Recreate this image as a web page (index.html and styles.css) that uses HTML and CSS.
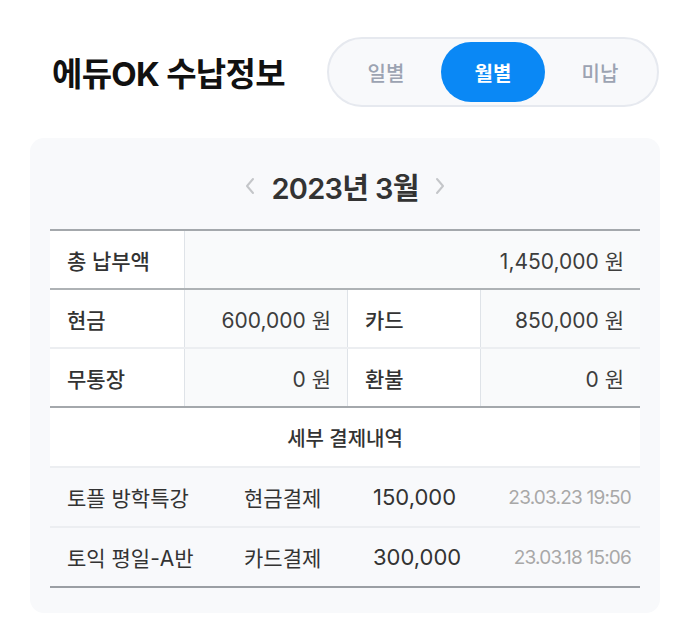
FILE: index.html
```html
<!DOCTYPE html>
<html lang="ko">
<head>
<meta charset="utf-8">
<title>에듀OK 수납정보</title>
<link rel="stylesheet" href="styles.css">
</head>
<body>
<header class="top">
  <h1 class="title">에듀OK 수납정보</h1>
  <nav class="seg">
    <span class="seg-item">일별</span>
    <span class="seg-item active">월별</span>
    <span class="seg-item">미납</span>
  </nav>
</header>
<section class="card">
  <div class="month-nav">
    <svg class="chev" width="12" height="20" viewBox="0 0 12 20"><path d="M9 3 L3 10 L9 17" fill="none" stroke="#c4c6c9" stroke-width="2" stroke-linecap="round" stroke-linejoin="round"/></svg>
    <span class="month">2023년 3월</span>
    <svg class="chev" width="12" height="20" viewBox="0 0 12 20"><path d="M3 3 L9 10 L3 17" fill="none" stroke="#c4c6c9" stroke-width="2" stroke-linecap="round" stroke-linejoin="round"/></svg>
  </div>
  <div class="summary">
    <div class="row row-total">
      <div class="cell label">총 납부액</div>
      <div class="cell value span3">1,450,000 원</div>
    </div>
    <div class="row row-mid">
      <div class="cell label">현금</div>
      <div class="cell value">600,000 원</div>
      <div class="cell label">카드</div>
      <div class="cell value">850,000 원</div>
    </div>
    <div class="row row-end">
      <div class="cell label">무통장</div>
      <div class="cell value">0 원</div>
      <div class="cell label">환불</div>
      <div class="cell value">0 원</div>
    </div>
    <div class="detail-head">세부 결제내역</div>
    <div class="detail">
      <span class="d-name">토플 방학특강</span>
      <span class="d-method">현금결제</span>
      <span class="d-amount">150,000</span>
      <span class="d-date">23.03.23 19:50</span>
    </div>
    <div class="detail last">
      <span class="d-name">토익 평일-A반</span>
      <span class="d-method">카드결제</span>
      <span class="d-amount">300,000</span>
      <span class="d-date">23.03.18 15:06</span>
    </div>
  </div>
</section>
</body>
</html>
```
FILE: styles.css
```css
* { box-sizing: border-box; }
html, body { margin: 0; padding: 0; background: #ffffff; }
body {
  font-family: Inter, "Noto Sans CJK KR", sans-serif;
  color: #333333;
  width: 690px;
}
.top {
  display: flex;
  align-items: center;
  justify-content: space-between;
  padding: 37px 31px 0 52px;
}
.title {
  margin: 0;
  font-size: 33px;
  font-weight: 700;
  letter-spacing: -0.7px;
  color: #111111;
}
.seg {
  display: grid;
  grid-template-columns: repeat(3, 104px);
  gap: 3px;
  padding: 3px 5px;
  height: 70px;
  border: 2px solid #e6e9ef;
  border-radius: 35px;
  background: #f8f9fb;
}
.seg-item {
  display: flex;
  align-items: center;
  justify-content: center;
  border-radius: 30px;
  font-size: 20px;
  font-weight: 500;
  color: #9ca3b2;
}
.seg-item.active {
  background: #0a88f5;
  color: #ffffff;
  font-weight: 600;
}
.card {
  margin: 31px 30px 0;
  padding: 26px 20px 25px;
  background: #f8f9fb;
  border-radius: 14px;
}
.month-nav {
  display: flex;
  align-items: center;
  justify-content: center;
  gap: 15px;
  height: 44px;
  margin-bottom: 21px;
}
.month {
  font-size: 29px;
  font-weight: 600;
  letter-spacing: -0.7px;
  color: #333333;
}
.summary {
  border-top: 2px solid #a4a8ac;
}
.row {
  display: grid;
  grid-template-columns: 134px 163px 133px 160px;
  height: 59px;
}
.row-total { border-bottom: 2px solid #aeb2b5; }
.row-mid { border-bottom: 2px solid #eceef1; }
.row-end { border-bottom: 2px solid #a4a8ac; }
.cell {
  display: flex;
  align-items: center;
  font-size: 21px;
}
.cell + .cell { border-left: 1px solid #dfe3e8; }
.label {
  background: #ffffff;
  padding-left: 17px;
  font-weight: 500;
  color: #333333;
}
.value {
  background: #f9fafb;
  justify-content: flex-end;
  padding-right: 16px;
  color: #3d3d3d;
}
.span3 { grid-column: span 3; }
.detail-head {
  display: flex;
  align-items: center;
  justify-content: center;
  height: 60px;
  background: #ffffff;
  border-bottom: 2px solid #eceef1;
  font-size: 20px;
  font-weight: 500;
  color: #333333;
}
.detail {
  display: grid;
  grid-template-columns: 177px 129px 1fr auto;
  align-items: center;
  height: 60px;
  padding: 0 9px 0 17px;
  background: #f8f9fb;
  border-bottom: 2px solid #eceef1;
  font-size: 21px;
  color: #333333;
}
.d-amount { font-size: 22px; }
.detail.last { border-bottom: 2px solid #9b9fa4; }
.d-date {
  font-size: 19px;
  color: #a8a8a8;
  letter-spacing: -0.8px;
}
```
